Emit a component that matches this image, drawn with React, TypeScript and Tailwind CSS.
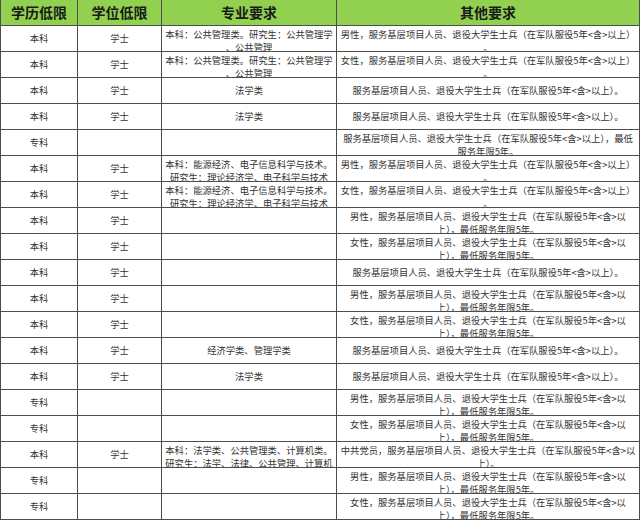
const MALE = '男性，服务基层项目人员、退役大学生士兵（在军队服役5年<含>以上）';
const FEMALE = '女性，服务基层项目人员、退役大学生士兵（在军队服役5年<含>以上）';
const BASE = '服务基层项目人员、退役大学生士兵（在军队服役5年<含>以上）。';
const MALE_MIN = ['男性，服务基层项目人员、退役大学生士兵（在军队服役5年<含>以', '上），最低服务年限5年。'];
const FEMALE_MIN = ['女性，服务基层项目人员、退役大学生士兵（在军队服役5年<含>以', '上），最低服务年限5年。'];
const PUBLIC_ADMIN = ['本科：公共管理类。研究生：公共管理学', '、公共管理'];
const ENERGY = ['本科：能源经济、电子信息科学与技术。', '研究生：理论经济学、电子科学与技术'];

type Row = { edu: string; degree: string; major: string[]; other: string[] };

const rows: Row[] = [
  { edu: '本科', degree: '学士', major: PUBLIC_ADMIN, other: [MALE, '。'] },
  { edu: '本科', degree: '学士', major: PUBLIC_ADMIN, other: [FEMALE, '。'] },
  { edu: '本科', degree: '学士', major: ['法学类'], other: [BASE] },
  { edu: '本科', degree: '学士', major: ['法学类'], other: [BASE] },
  {
    edu: '专科',
    degree: '',
    major: [],
    other: ['服务基层项目人员、退役大学生士兵（在军队服役5年<含>以上），最低', '服务年限5年。'],
  },
  { edu: '本科', degree: '学士', major: ENERGY, other: [MALE, '。'] },
  { edu: '本科', degree: '学士', major: ENERGY, other: [FEMALE, '。'] },
  { edu: '本科', degree: '学士', major: [], other: MALE_MIN },
  { edu: '本科', degree: '学士', major: [], other: FEMALE_MIN },
  { edu: '本科', degree: '学士', major: [], other: [BASE] },
  { edu: '本科', degree: '学士', major: [], other: MALE_MIN },
  { edu: '本科', degree: '学士', major: [], other: FEMALE_MIN },
  { edu: '本科', degree: '学士', major: ['经济学类、管理学类'], other: [BASE] },
  { edu: '本科', degree: '学士', major: ['法学类'], other: [BASE] },
  { edu: '专科', degree: '', major: [], other: MALE_MIN },
  { edu: '专科', degree: '', major: [], other: FEMALE_MIN },
  {
    edu: '本科',
    degree: '学士',
    major: ['本科：法学类、公共管理类、计算机类。', '研究生：法学、法律、公共管理、计算机'],
    other: ['中共党员，服务基层项目人员、退役大学生士兵（在军队服役5年<含>以', '上）。'],
  },
  { edu: '专科', degree: '', major: [], other: MALE_MIN },
  { edu: '专科', degree: '', major: [], other: FEMALE_MIN },
];

const Cell = ({ lines, first }: { lines: string[]; first?: boolean }) => {
  const multi = lines.length > 1;
  return (
    <div
      className={`h-[26px] overflow-hidden border-r border-b border-[#4d4d4d] text-[9.3px] text-[#333] flex flex-col items-center whitespace-nowrap ${
        multi ? 'justify-start pt-[1.5px] leading-[13.5px]' : 'justify-center leading-[13px]'
      } ${first ? 'border-l' : ''}`}
    >
      {lines.map((line, i) => (
        <span key={i}>{line}</span>
      ))}
    </div>
  );
};

const Head = ({ label, first }: { label: string; first?: boolean }) => (
  <div
    className={`h-[26px] bg-[#92d050] border-r border-b border-[#4d4d4d] flex items-center justify-center text-[14px] font-bold text-[#1a1a1a] ${
      first ? 'border-l' : ''
    }`}
  >
    {label}
  </div>
);

export default function App() {
  return (
    <div
      className="w-[640px] h-[520px] overflow-hidden bg-white"
      style={{ fontFamily: '"Noto Sans CJK SC", "Noto Sans", sans-serif' }}
    >
      <div className="grid grid-cols-[78px_84px_175px_303px]">
        <Head label="学历低限" first />
        <Head label="学位低限" />
        <Head label="专业要求" />
        <Head label="其他要求" />
        {rows.map((row, i) => (
          <div key={i} className="contents">
            <Cell lines={[row.edu]} first />
            <Cell lines={row.degree ? [row.degree] : []} />
            <Cell lines={row.major} />
            <Cell lines={row.other} />
          </div>
        ))}
      </div>
    </div>
  );
}
